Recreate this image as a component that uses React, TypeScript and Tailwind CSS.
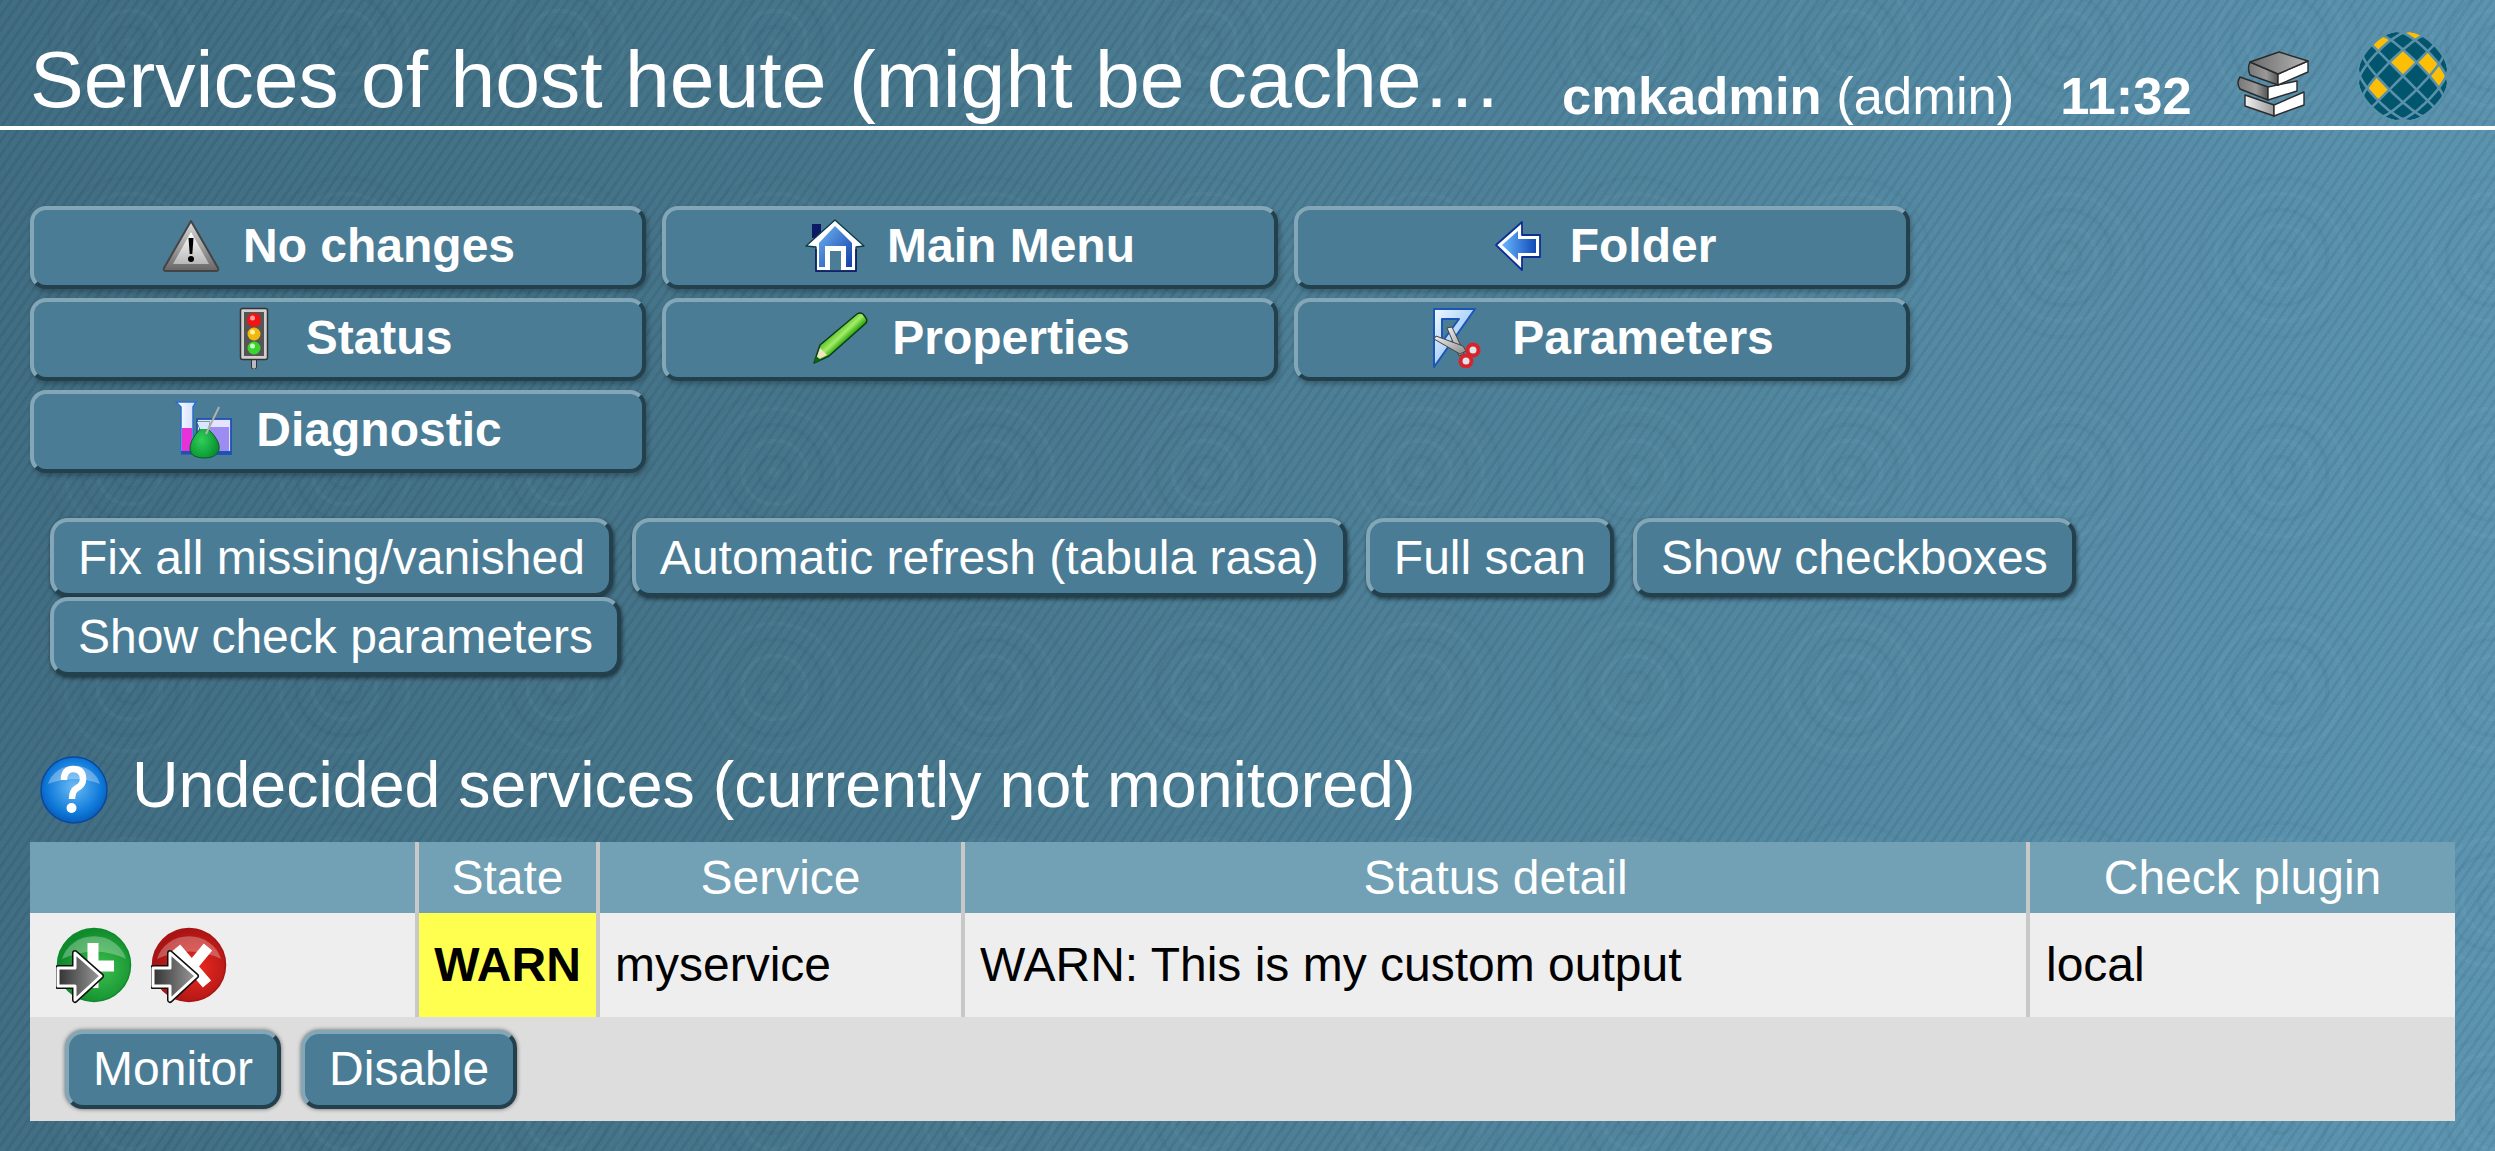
import type { ReactNode } from 'react'

// fisheye projection used for the logo globe
function project(a: number, b: number): [number, number] {
  const x = a - b
  const y = -(a + b)
  const rho = Math.sqrt(x * x + y * y) || 1
  const r = Math.sin(Math.min(rho * 0.305, Math.PI / 2)) * 46
  return [46 + (x / rho) * r, 46 + (y / rho) * r]
}

function quad(a: number, b: number) {
  const s = 0.5
  const pts = [project(a - s, b - s), project(a + s, b - s), project(a + s, b + s), project(a - s, b + s)]
  return pts.map((p) => p[0].toFixed(1) + ',' + p[1].toFixed(1)).join(' ')
}

function gridLine(k: number, alongA: boolean) {
  const pts: string[] = []
  for (let t = -6; t <= 6; t += 0.25) {
    const p = alongA ? project(t, k) : project(k, t)
    pts.push(p[0].toFixed(1) + ' ' + p[1].toFixed(1))
  }
  return 'M' + pts.join('L')
}

function Globe() {
  const yellow: [number, number][] = [[0.5, 0.5], [1.5, -0.5], [1.5, -1.5], [-1.5, 0.5], [0.5, 2.5], [2.5, 1.5], [-2.5, -2.5]]
  const lines = [-5, -4, -3, -2, -1, 0, 1, 2, 3, 4, 5]
  return (
    <svg viewBox="0 0 92 92" className="w-[92px] h-[92px]">
      <defs>
        <clipPath id="globeClip"><circle cx="46" cy="46" r="46" /></clipPath>
      </defs>
      <g clipPath="url(#globeClip)">
        <circle cx="46" cy="46" r="46" fill="#01566d" />
        {yellow.map(([a, b]) => <polygon key={a + '_' + b} points={quad(a, b)} fill="#fdbf05" />)}
        {lines.map((k) => <path key={'a' + k} d={gridLine(k, true)} fill="none" stroke="#5a90aa" strokeWidth="2.6" />)}
        {lines.map((k) => <path key={'b' + k} d={gridLine(k, false)} fill="none" stroke="#5a90aa" strokeWidth="2.6" />)}
      </g>
    </svg>
  )
}

function Books() {
  return (
    <svg viewBox="0 0 73 66" className="w-[73px] h-[66px]">
      <defs>
        <linearGradient id="bookTop" x1="0" x2="1"><stop offset="0" stopColor="#6a6a6a" /><stop offset="1" stopColor="#b5b5b5" /></linearGradient>
        <linearGradient id="bookSide" x1="0" x2="1"><stop offset="0" stopColor="#777" /><stop offset="0.6" stopColor="#999" /><stop offset="1" stopColor="#555" /></linearGradient>
        <linearGradient id="bookLow" x1="0" x2="1"><stop offset="0" stopColor="#f2f2f2" /><stop offset="1" stopColor="#999" /></linearGradient>
      </defs>
      <g stroke="#2b2b2b" strokeWidth="1.4" strokeLinejoin="round">
        <polygon points="9,44 38,54 38,65 9,55" fill="url(#bookLow)" />
        <polygon points="38,54 68,41 68,54 38,65" fill="#fff" />
        <path d="M4 26 L32 36 V49 L4 38 Q0 32 4 26 Z" fill="url(#bookSide)" />
        <polygon points="32,36 61,30 61,40 32,49" fill="#fff" />
        <path d="M14 11 L42 23 V34 L14 24 Q11 17 14 11 Z" fill="url(#bookSide)" />
        <polygon points="42,23 72,10 72,21 42,34" fill="#fff" />
        <polygon points="14,11 43,1 72,10 42,23" fill="url(#bookTop)" />
      </g>
    </svg>
  )
}

function WarningIcon() {
  return (
    <svg viewBox="0 0 58 54" className="w-[58px] h-[54px]">
      <defs>
        <linearGradient id="warnIn" x1="0" y1="0" x2="0" y2="1"><stop offset="0" stopColor="#fff" /><stop offset="1" stopColor="#b8b8b8" /></linearGradient>
        <linearGradient id="warnOut" x1="0" y1="0" x2="0" y2="1"><stop offset="0" stopColor="#ddd" /><stop offset="1" stopColor="#666" /></linearGradient>
      </defs>
      <path d="M29 2 L56 49 Q57 52 54 52 H4 Q1 52 2 49 Z" fill="url(#warnOut)" stroke="#444" strokeWidth="2" strokeLinejoin="round" />
      <path d="M29 13 L47 45 H11 Z" fill="url(#warnIn)" />
      <path d="M26.5 19 H31.5 L30.3 35 H27.7 Z" fill="#000" />
      <circle cx="29" cy="40" r="3" fill="#000" />
    </svg>
  )
}

function TrafficIcon() {
  return (
    <svg viewBox="0 0 30 62" className="w-[30px] h-[62px]">
      <rect x="12.5" y="50" width="5" height="12" rx="2" fill="#bbb" stroke="#333" />
      <rect x="1.5" y="1.5" width="27" height="51" rx="2" fill="#cfcfcf" stroke="#333" strokeWidth="1.5" />
      <rect x="5" y="5" width="20" height="44" fill="#555" />
      <circle cx="15" cy="13" r="7" fill="#f01414" />
      <circle cx="13.5" cy="11" r="2.5" fill="#ff9a9a" />
      <circle cx="15" cy="27" r="6.5" fill="#f2b90c" />
      <circle cx="13.5" cy="25" r="2.5" fill="#fff1a0" />
      <circle cx="15" cy="41" r="6.5" fill="#3bd32f" />
      <circle cx="13.5" cy="39" r="2.5" fill="#c8ffc0" />
    </svg>
  )
}

function FlaskIcon() {
  return (
    <svg viewBox="0 0 58 58" className="w-[58px] h-[58px]">
      <defs>
        <radialGradient id="flaskGreen" cx="0.4" cy="0.5" r="0.6"><stop offset="0" stopColor="#2fd05a" /><stop offset="1" stopColor="#06902f" /></radialGradient>
        <linearGradient id="tubeGlass" x1="0" x2="1"><stop offset="0" stopColor="#fff" /><stop offset="1" stopColor="#cfdcff" /></linearGradient>
      </defs>
      <path d="M1 1 H21 L18 6 V51 H6 V6 Z" fill="url(#tubeGlass)" stroke="#2a6fd0" strokeWidth="1.5" />
      <rect x="7" y="27" width="10" height="23" fill="#e632d8" />
      <rect x="22" y="18" width="34" height="35" fill="#e4e4ff" stroke="#1f50b4" strokeWidth="1.8" />
      <rect x="24" y="26" width="30" height="25" fill="#9d8cf2" />
      <rect x="6" y="50" width="50" height="3.5" fill="#1f50b4" />
      <path d="M22 21 H35 L33 28 Q46 40 44 49 Q41 57 30 57 Q16 57 15 49 Q14 40 25 28 Z" fill="url(#flaskGreen)" stroke="#0d5c2a" strokeWidth="1" />
      <path d="M22 21 H35 L33 28 H25 Z" fill="#d9e6ff" />
      <line x1="44" y1="6" x2="31" y2="33" stroke="#b0b0b0" strokeWidth="2" />
    </svg>
  )
}

function HomeIcon() {
  return (
    <svg viewBox="0 0 60 54" className="w-[60px] h-[54px]">
      <defs>
        <linearGradient id="homeBlue" x1="0" y1="0" x2="1" y2="1"><stop offset="0" stopColor="#6fb4f2" /><stop offset="1" stopColor="#123fa8" /></linearGradient>
      </defs>
      <rect x="7" y="5" width="9" height="14" fill="#0c1a66" />
      <path d="M30 1 L59 27 L51 28 V52 H11 V28 L1 27 Z" fill="#fff" stroke="#0c3a4a" strokeWidth="1.3" strokeLinejoin="round" />
      <path d="M30 7 L47 24 V48 H14 V24 Z" fill="url(#homeBlue)" />
      <path d="M20 50 V27 H41 V50 H36 V32 H25 V50 Z" fill="#fff" />
      <path d="M25 32 H36 V52 H25 Z" fill="#4c7d96" />
      <path d="M11 30 V52 H51 V30" fill="none" stroke="#0c1a66" strokeWidth="1.5" />
    </svg>
  )
}

function PencilIcon() {
  return (
    <svg viewBox="0 0 55 52" className="w-[55px] h-[52px]">
      <defs>
        <linearGradient id="pencilG" x1="0.1" y1="0.1" x2="0.9" y2="0.9"><stop offset="0.3" stopColor="#38b40c" /><stop offset="0.48" stopColor="#a6ec68" /><stop offset="0.6" stopColor="#2aa80a" /><stop offset="0.85" stopColor="#0a7f0a" /></linearGradient>
      </defs>
      <path d="M1 51 L7 33 L44 2 Q47 0 50 2 L53 6 Q55 9 52 12 L16 44 Z" fill="url(#pencilG)" stroke="#0b3a1c" strokeWidth="1.5" strokeLinejoin="round" />
      <path d="M3 48 L7 36 L14 43 Z" fill="#f2e5c0" />
      <path d="M1 51 L3 44 L8 48 Z" fill="#0a6a0a" />
    </svg>
  )
}

function BackIcon() {
  return (
    <svg viewBox="0 0 46 50" className="w-[46px] h-[50px]">
      <defs>
        <linearGradient id="backBlue" x1="0" x2="1"><stop offset="0" stopColor="#6ab6ff" /><stop offset="1" stopColor="#0f4bb8" /></linearGradient>
      </defs>
      <path d="M1 24 L27 1 V14 H45 V36 H27 V49 Z" fill="#fff" stroke="#0c2f96" strokeWidth="1.8" strokeLinejoin="round" />
      <path d="M7 24 L23 10 V18 H41 V32 H23 V39 Z" fill="url(#backBlue)" />
    </svg>
  )
}

function ParametersIcon() {
  return (
    <svg viewBox="0 0 54 60" className="w-[54px] h-[60px]">
      <defs>
        <linearGradient id="paramBlue" x1="0" y1="0" x2="1" y2="1"><stop offset="0" stopColor="#f2f8ff" /><stop offset="1" stopColor="#6cb0f5" /></linearGradient>
        <linearGradient id="bladeG" x1="0" y1="0" x2="1" y2="1"><stop offset="0" stopColor="#f0f0f0" /><stop offset="1" stopColor="#8a8a8a" /></linearGradient>
      </defs>
      <path fillRule="evenodd" d="M1 1 H42 L1 59 Z M9 11 V34 L26 11 Z" fill="url(#paramBlue)" stroke="#1a56b8" strokeWidth="2" strokeLinejoin="round" />
      <path d="M14 20 L19 19 L28 38 L31 46 L26 48 Z" fill="url(#bladeG)" stroke="#444" strokeWidth="1" />
      <path d="M1 31 L3 28 L30 38 L33 43 L27 46 Z" fill="url(#bladeG)" stroke="#444" strokeWidth="1" />
      <circle cx="40" cy="42" r="5.5" fill="#dfe5e8" stroke="#d8242c" strokeWidth="4" />
      <circle cx="33" cy="53" r="5.5" fill="#dfe5e8" stroke="#d8242c" strokeWidth="4" />
    </svg>
  )
}

function HelpIcon() {
  return (
    <svg viewBox="0 0 68 68" className="w-[68px] h-[68px] shrink-0">
      <defs>
        <radialGradient id="helpBlue" cx="0.5" cy="0.45" r="0.6"><stop offset="0" stopColor="#6bbcf7" /><stop offset="0.7" stopColor="#0d78d8" /><stop offset="1" stopColor="#0a4fa8" /></radialGradient>
      </defs>
      <circle cx="34" cy="34" r="33" fill="url(#helpBlue)" stroke="#0a48a0" strokeWidth="1.5" />
      <path d="M8 28 A27 25 0 0 1 60 28 Q34 18 8 28 Z" fill="#fff" opacity="0.3" />
      <path d="M24 24 Q24 13 33 13 Q43 13 43 23 Q43 29 37 32 Q32 35 32 43" fill="none" stroke="#fff" strokeWidth="6.5" />
      <circle cx="31.5" cy="52" r="5" fill="#fff" />
    </svg>
  )
}

function ActionIcon({ id, from, to, children }: { id: string; from: string; to: string; children: ReactNode }) {
  return (
    <svg viewBox="0 0 76 78" className="w-[76px] h-[78px]">
      <defs>
        <radialGradient id={id} cx="0.6" cy="0.55" r="0.65"><stop offset="0" stopColor={from} /><stop offset="0.85" stopColor={to} /><stop offset="1" stopColor={to} /></radialGradient>
        <linearGradient id={id + 'A'} x1="0" x2="1"><stop offset="0" stopColor="#333" /><stop offset="1" stopColor="#9a9a9a" /></linearGradient>
      </defs>
      <circle cx="38" cy="39" r="36.5" fill={'url(#' + id + ')'} stroke={to} strokeWidth="1.5" />
      <path d="M6 33 A33 30 0 0 1 70 33 Q40 18 6 33 Z" fill="#fff" opacity="0.28" />
      {children}
      <polygon points="2,42 19,42 19,27 45,50 19,74 19,60 2,60" fill="none" stroke="#111" strokeWidth="6" strokeLinejoin="round" />
      <polygon points="2,42 19,42 19,27 45,50 19,74 19,60 2,60" fill={'url(#' + id + 'A)'} stroke="#fff" strokeWidth="3" strokeLinejoin="round" />
    </svg>
  )
}

function NavButton({ icon, label }: { icon: ReactNode; label: string }) {
  return (
    <a className="flex h-[83px] items-center justify-center gap-[22px] rounded-[16px] border-[4px] border-t-[#84a7b8] border-l-[#84a7b8] border-r-[#23404d] border-b-[#23404d] bg-[#4b7c95] pb-[4px] text-[48px] font-bold text-white shadow-[2px_3px_5px_rgba(0,0,0,0.25)]">
      <span className="flex w-[60px] items-center justify-center">{icon}</span>
      {label}
    </a>
  )
}

function FormButton({ label, soft }: { label: string; soft?: boolean }) {
  return (
    <button className={(soft ? 'shadow-[0_0_4px_rgba(0,0,0,0.55)] ' : 'shadow-[1px_2px_4px_rgba(0,0,0,0.55)] ') + 'flex h-[79px] items-center rounded-[18px] border-[4px] border-t-[#84a7b8] border-l-[#84a7b8] border-r-[#23404d] border-b-[#23404d] bg-[#4b7c95] px-[24px] text-[48px] text-white'}>
      {label}
    </button>
  )
}

const cell = 'flex items-center border-l-[4px] border-[#c8c8c8]'

export default function App() {
  return (
    <div className="h-screen w-full overflow-hidden bg-[#4a7d95] font-['Liberation_Sans',Arial,sans-serif] [background-image:repeating-linear-gradient(125deg,rgba(0,0,0,0.055)_0px,rgba(0,0,0,0.055)_3px,rgba(255,255,255,0.012)_3px,rgba(255,255,255,0.012)_8px),radial-gradient(circle,rgba(255,255,255,0.028)_0_5px,transparent_5px_14px,rgba(0,0,0,0.03)_14px_18px,transparent_18px_30px,rgba(255,255,255,0.028)_30px_34px,transparent_34px_46px,rgba(0,0,0,0.03)_46px_50px,transparent_50px_62px,rgba(255,255,255,0.024)_62px_66px,transparent_66px_78px,rgba(0,0,0,0.02)_78px_82px,transparent_82px),linear-gradient(95deg,#3f6c82_0%,#45758b_35%,#4f849d_65%,#5b94b0_100%)] [background-size:auto,215px_215px,auto] [background-position:0_0,22px_-65px,0_0]">
      {/* Header */}
      <div className="flex h-[130px] items-stretch border-b-[4px] border-white text-white">
        <h1 className="ml-[30px] w-[1490px] truncate pt-[41px] text-[80.5px] leading-[76px] font-normal">
          Services of host heute (might be cached data)
        </h1>
        <div className="ml-[42px] whitespace-nowrap pt-[66px] text-[52.5px] leading-[60px]">
          <b>cmkadmin</b> (admin)
        </div>
        <div className="ml-[46px] pt-[66px] text-[52.5px] leading-[60px] font-bold">11:32</div>
        <div className="ml-[44px] pt-[51px]"><Books /></div>
        <div className="ml-[48px] pt-[30px]"><Globe /></div>
      </div>

      {/* Context buttons */}
      <div className="ml-[30px] mt-[76px] grid w-fit grid-cols-[616px_616px_616px] gap-x-[16px] gap-y-[9px]">
        <NavButton icon={<WarningIcon />} label="No changes" />
        <NavButton icon={<HomeIcon />} label="Main Menu" />
        <NavButton icon={<BackIcon />} label="Folder" />
        <NavButton icon={<TrafficIcon />} label="Status" />
        <NavButton icon={<PencilIcon />} label="Properties" />
        <NavButton icon={<ParametersIcon />} label="Parameters" />
        <NavButton icon={<FlaskIcon />} label="Diagnostic" />
      </div>

      {/* Action buttons */}
      <div className="ml-[50px] mt-[45px] flex w-[2100px] flex-wrap gap-x-[19px]">
        <FormButton label="Fix all missing/vanished" />
        <FormButton label="Automatic refresh (tabula rasa)" />
        <FormButton label="Full scan" />
        <FormButton label="Show checkboxes" />
        <FormButton label="Show check parameters" />
      </div>

      {/* Undecided services */}
      <div className="ml-[40px] mt-[80px] flex h-[68px] items-center gap-[24px] text-white">
        <HelpIcon />
        <h2 className="pb-[10px] text-[64.5px] font-normal">Undecided services (currently not monitored)</h2>
      </div>

      <div className="ml-[30px] mt-[18px] w-[2425px] bg-[#eeeeee] text-[48px] text-black">
        <div className="grid h-[71px] grid-cols-[385px_181px_365px_1065px_1fr] bg-[#72a0b4] text-white">
          <div />
          <div className={cell + ' justify-center'}>State</div>
          <div className={cell + ' justify-center'}>Service</div>
          <div className={cell + ' justify-center'}>Status detail</div>
          <div className={cell + ' justify-center'}>Check plugin</div>
        </div>
        <div className="grid h-[104px] grid-cols-[385px_181px_365px_1065px_1fr]">
          <div className="flex items-center gap-[19px] pl-[26px]">
            <ActionIcon id="addIcon" from="#3cc04e" to="#0f8a2c">
              <path d="M37 17 V62 M20 40 H58" stroke="#fff" strokeWidth="11" fill="none" />
            </ActionIcon>
            <ActionIcon id="delIcon" from="#ee2a20" to="#a81414">
              <path d="M25 22 L56 58 M57 21 L28 56" stroke="#fff" strokeWidth="11" fill="none" />
            </ActionIcon>
          </div>
          <div className={cell + ' justify-center bg-[#ffff50] font-bold'}>WARN</div>
          <div className={cell + ' pl-[15px]'}>myservice</div>
          <div className={cell + ' pl-[15px]'}>WARN: This is my custom output</div>
          <div className={cell + ' pl-[16px]'}>local</div>
        </div>
        <div className="flex h-[104px] items-center gap-[20px] bg-[#dddddd] pl-[35px]">
          <FormButton label="Monitor" soft />
          <FormButton label="Disable" soft />
        </div>
      </div>
    </div>
  )
}
